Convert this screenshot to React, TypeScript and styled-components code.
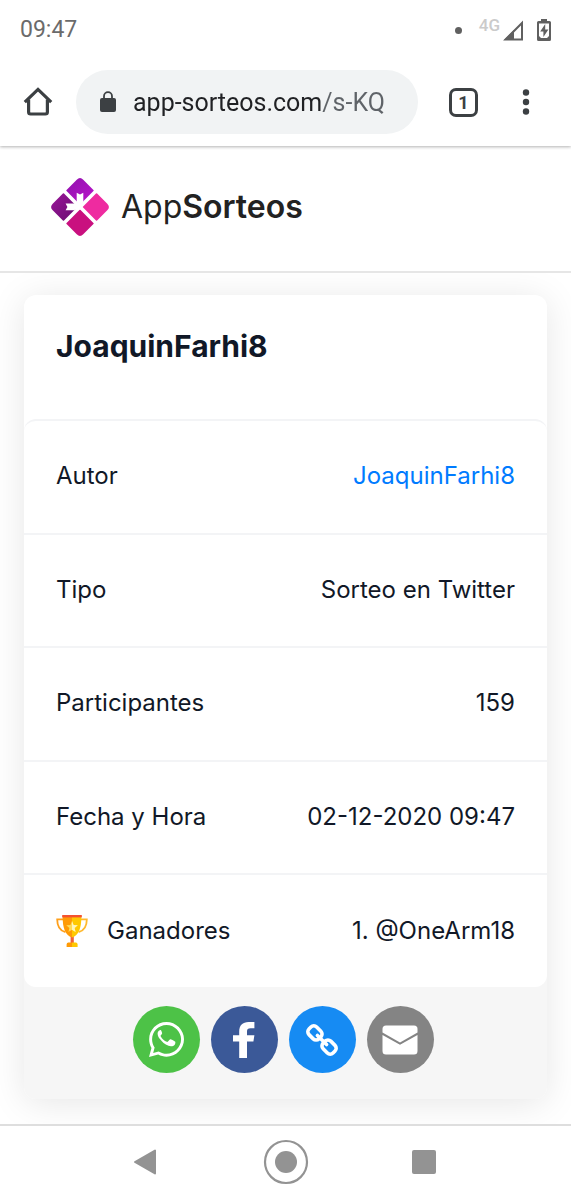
import React, { useState } from 'react';
import styled, { createGlobalStyle } from 'styled-components';

const GlobalStyle = createGlobalStyle`
  *, *::before, *::after { box-sizing: border-box; }
  body { margin: 0; background: #fff; font-family: Inter, sans-serif; color: #111827; }
  button { border: 0; padding: 0; margin: 0; background: none; font: inherit; color: inherit; cursor: pointer; }
  svg { display: block; flex: none; }
`;

const Screen = styled.div`
  display: flex;
  flex-direction: column;
  min-height: 100vh;
`;

const StatusBar = styled.div`
  position: relative;
  display: flex;
  align-items: center;
  height: 58px;
  padding: 2px 20px 0;
  background: #fff;
  font: 400 23px/28px Roboto, sans-serif;
  color: #6b6b6b;
  z-index: 3;
`;

const StatusIcons = styled.div`
  display: flex;
  align-items: center;
  margin-left: auto;
`;

const Dot = styled.span`
  width: 7px;
  height: 7px;
  margin-right: 17px;
  border-radius: 50%;
  background: #606060;
`;

const Network = styled.span`
  margin-right: 3px;
  padding-bottom: 10px;
  font: 500 17px/20px Roboto, sans-serif;
  color: #cbcbcb;
`;

const Battery = styled.svg`
  margin: 0 0 0 13px;
`;

const Toolbar = styled.div`
  position: relative;
  display: flex;
  align-items: center;
  height: 88px;
  padding: 0 30px 0 22px;
  background: #fff;
  box-shadow: 0 1px 3px rgba(0, 0, 0, 0.3);
  color: #3c4043;
  z-index: 2;
`;

const AddressBar = styled.label`
  display: flex;
  align-items: center;
  flex: 1;
  min-width: 0;
  height: 64px;
  margin: 0 31px 0 22px;
  padding: 0 30px 0 23px;
  gap: 16px;
  border-radius: 32px;
  background: #f1f3f4;
`;

const AddressInput = styled.input`
  flex: 1;
  min-width: 0;
  width: 100%;
  border: 0;
  padding: 2px 0 0;
  outline: 0;
  font: 400 25px/32px Roboto, sans-serif;
  color: transparent;
  caret-color: #202124;
  background: linear-gradient(90deg, #202124 188px, #5f6368 188px);
  -webkit-background-clip: text;
  background-clip: text;
`;

const TabsButton = styled.button`
  width: 29px;
  height: 29px;
  border: 3px solid #3c4043;
  border-radius: 7px;
  font: 700 18px/23px Roboto, sans-serif;
`;

const MenuButton = styled.button`
  display: grid;
  place-items: center;
  width: 30px;
  height: 40px;
  margin-left: 33px;
`;

const SiteHeader = styled.header`
  position: relative;
  height: 127px;
  padding: 31px 50px 0;
  border-bottom: 2px solid #e6e6e6;
  background: #fff;
  z-index: 1;
`;

const Brand = styled.a`
  display: inline-flex;
  align-items: center;
  gap: 11px;
  font: 400 32px/60px Inter, sans-serif;
  color: #222;
  text-decoration: none;

  b { font-weight: 600; }
`;

const Main = styled.main`
  display: flex;
  flex: 1;
  flex-direction: column;
  padding: 22px 24px 25px;
`;

const Card = styled.section`
  display: flex;
  flex: 1;
  flex-direction: column;
  border-radius: 12px;
  background: #fff;
  box-shadow: 0 4px 36px rgba(0, 0, 0, 0.1);
`;

const Title = styled.h1`
  margin: 0;
  padding: 31px 32px 53px;
  font-size: 30px;
  line-height: 40px;
  font-weight: 700;
`;

const CardBody = styled.div`
  position: relative;
  display: flex;
  flex: 1;
  z-index: 1;
`;

const Details = styled.dl`
  display: grid;
  grid-auto-rows: 1fr;
  flex: 1;
  margin: 0;
  border-radius: 12px;
  background: #fff;
`;

const Row = styled.div`
  display: flex;
  align-items: center;
  justify-content: space-between;
  gap: 16px;
  padding: 0 32px 1px;
  border-top: 2px solid #f3f4f6;
  font-size: 24px;
  line-height: 32px;
  font-weight: 400;

  &:first-child { border-radius: 12px 12px 0 0; }
  dt { display: flex; align-items: center; gap: 19px; }
  dd { margin: 0; text-align: right; }
`;

const AuthorLink = styled.a`
  color: #007bff;
  text-decoration: none;
`;

const ShareBar = styled.footer`
  display: flex;
  justify-content: center;
  gap: 11px;
  margin-top: -12px;
  padding: 31px 5px 26px 0;
  border-radius: 0 0 12px 12px;
  background: #f6f6f6;
`;

const ShareButton = styled.button<{ $color: string }>`
  display: grid;
  place-items: center;
  width: 67px;
  height: 67px;
  border-radius: 50%;
  background: ${(p) => p.$color};
`;

const SystemNav = styled.nav`
  position: relative;
  display: flex;
  align-items: center;
  justify-content: center;
  gap: 92px;
  height: 76px;
  padding-bottom: 2px;
  border-top: 2px solid #dedede;
  background: #fff;
  z-index: 1;
`;

const NavButton = styled.button`
  display: grid;
  place-items: center;
  width: 46px;
  height: 46px;
`;

const HomeIcon = () => (
  <svg width="32" height="32" viewBox="0 0 32 32" fill="none" stroke="#3c4043" strokeWidth="3.2">
    <path d="M2.8 16.2 16 3.4l13.2 12.8" strokeLinejoin="miter" />
    <path d="M6.6 13.5V26q0 2 2 2h14.8q2 0 2-2V13.5" />
  </svg>
);

const LockIcon = () => (
  <svg width="18" height="24" viewBox="0 0 18 24">
    <rect x="1" y="8" width="16" height="14" rx="2" fill="#3c4043" />
    <path d="M5 9V6.2a4 4 0 0 1 8 0V9" fill="none" stroke="#3c4043" strokeWidth="1.8" />
  </svg>
);

const LogoMark = () => (
  <svg width="60" height="60" viewBox="-30 -30 60 60" aria-hidden="true">
    <defs>
      <linearGradient id="top" x1="0" x2="1"><stop stopColor="#9a12b4" /><stop offset="1" stopColor="#b013c4" /></linearGradient>
      <linearGradient id="left" x1="0" x2="1"><stop stopColor="#8f1390" /><stop offset="1" stopColor="#74107a" /></linearGradient>
    </defs>
    <g transform="rotate(45)">
      <path d="M-17-21.6H-2.6q.8 0 .8.8V-2.6q0 .8-.8.8H-20.8q-.8 0-.8-.8V-17q0-4.6 4.6-4.6Z" fill="url(#top)" />
      <path d="M2.6-21.6H17q4.6 0 4.6 4.6V-2.6q0 .8-.8.8H2.6q-.8 0-.8-.8V-20.8q0-.8.8-.8Z" fill="#ee2ba0" />
      <path d="M-20.8 1.8H-2.6q.8 0 .8.8V20.8q0 .8-.8.8H-17q-4.6 0-4.6-4.6V2.6q0-.8.8-.8Z" fill="url(#left)" />
      <path d="M2.6 1.8H20.8q.8 0 .8.8V17q0 4.6-4.6 4.6H2.6q-.8 0-.8-.8V2.6q0-.8.8-.8Z" fill="#c9107f" />
    </g>
    <path d="M-3.3-14.2 0-12.6 3.3-14.2V-6L1 1-3.3-5ZM-14.4-3.4-12.6 0l-1.8 3.2H-6L1 0-5-3.4Z" fill="#fff" />
  </svg>
);

const TrophyIcon = () => (
  <svg width="32" height="32" viewBox="0 0 32 32" aria-hidden="true">
    <path d="M7 4.4H1.2c0 7 2.2 11 8.2 12.8" fill="none" stroke="#ff9f1a" strokeWidth="1.8" />
    <path d="M25 4.4h5.8c0 7-2.2 11-8.2 12.8" fill="none" stroke="#ffb92e" strokeWidth="1.8" />
    <path d="M14.6 20h3.2v9h-3.2z" fill="#f0603a" />
    <path d="M6.6 1H16v21.6C9.4 20 6.6 14 6.6 1Z" fill="#ff9a05" />
    <path d="M16 1h9.4C25.4 14 22.6 20 16 22.6Z" fill="#ffc800" />
    <path d="M6.2 0h19.6v2.4H6.2z" fill="#f4522f" />
    <path d="m16 6 1.6 3.9 4.2.3-3.2 2.7 1 4.1-3.6-2.2-3.6 2.2 1-4.1-3.2-2.7 4.2-.3Z" fill="#ffdb55" />
    <path d="m16 6 1.6 3.9 4.2.3-3.2 2.7 1 4.1-3.6-2.2Z" fill="#fff5b8" />
    <path d="M12.4 27.6H16V32h-5.4v-2.6q0-1.8 1.8-1.8Z" fill="#ff9a05" />
    <path d="M16 27.6h3.8q1.8 0 1.8 1.8V32H16Z" fill="#ffc800" />
  </svg>
);

const WhatsAppIcon = () => (
  <svg width="35" height="35" viewBox="0 32 448 448" fill="#fff">
    <path d="M380.9 97.1C339 55.1 283.2 32 223.9 32c-122.4 0-222 99.6-222 222 0 39.1 10.2 77.3 29.6 111L0 480l117.7-30.9c32.4 17.7 68.9 27 106.1 27h.1c122.3 0 224.1-99.6 224.1-222 0-59.3-25.2-115-67.1-157zm-157 341.6c-33.2 0-65.7-8.9-94-25.7l-6.7-4-69.8 18.3L72 359.2l-4.4-7c-18.5-29.4-28.2-63.3-28.2-98.2 0-101.7 82.8-184.5 184.6-184.5 49.3 0 95.6 19.2 130.4 54.1 34.8 34.9 56.2 81.2 56.1 130.5 0 101.8-84.9 184.6-186.6 184.6z" />
    <path d="M160 150c-7-16-14-16-22-14-16 4-28 22-28 46 0 28 20 56 30 68 28 38 60 68 110 86 36 13 76 2 84-24 4-13 5-22 2-28-3-5-46-28-56-31-7-2-12-1-17 6l-20 24c-4 5-9 6-16 3-30-13-58-37-78-72-3-6-1-10 3-14 14-15 19-22 15-32Z" />
  </svg>
);

const FacebookIcon = () => (
  <svg width="22" height="36" viewBox="0 0 22 36" fill="#fff">
    <path d="M6.2 36V19.6H0v-6.4h6.2V9.6C6.2 3.4 9.6 0 15.6 0H21.4v6.2h-3.8c-2.6 0-3.6 1-3.6 3.2v3.8h7.4l-1 6.4H14V36Z" />
  </svg>
);

const LinkIcon = () => (
  <svg width="36" height="36" viewBox="-18 -18 36 36" fill="none" stroke="#fff" strokeWidth="3.6">
    <g transform="rotate(45)">
      <rect x="-17" y="-5.4" width="14" height="10.8" rx="4" />
      <rect x="3" y="-5.4" width="14" height="10.8" rx="4" />
      <path d="M-6.5 0h13" strokeLinecap="round" />
    </g>
  </svg>
);

const MailIcon = () => (
  <svg width="36" height="30" viewBox="0 0 36 30" fill="#fff">
    <path d="M4 .5h28Q35.5.5 35.5 4v3.4L18 17.4.5 7.4V4Q.5.5 4 .5Z" />
    <path d="M.5 10 18 19.8 35.5 10V26q0 3.5-3.5 3.5H4Q.5 29.5.5 26Z" />
  </svg>
);

const SHARE_TARGETS = [
  { label: 'WhatsApp', color: '#4dc247', icon: <WhatsAppIcon /> },
  { label: 'Facebook', color: '#3b5998', icon: <FacebookIcon /> },
  { label: 'Copiar enlace', color: '#168bf3', icon: <LinkIcon /> },
  { label: 'Correo', color: '#848484', icon: <MailIcon /> },
];

export default function App() {
  const [url, setUrl] = useState('app-sorteos.com/s-KQ');

  return (
    <Screen>
      <GlobalStyle />
      <StatusBar>
        <span>09:47</span>
        <StatusIcons>
          <Dot />
          <Network>4G</Network>
          <svg width="21" height="21" viewBox="0 0 21 21">
            <path d="M2.5 19.5 19 3v16.5Z" fill="none" stroke="#606060" strokeWidth="2" />
            <path d="M1 20 11 10v10Z" fill="#606060" />
          </svg>
          <Battery width="14" height="22" viewBox="0 0 14 22">
            <path d="M4 0h6v2h2.5Q14 2 14 3.5v17q0 1.5-1.5 1.5h-11Q0 22 0 20.5v-17Q0 2 1.5 2H4Z" fill="#606060" />
            <path d="M2 4.5h10V17l-2 2H4l-2-2Z" fill="#fff" />
            <path d="M8.2 5 3.2 12.6h3.2V18l5-7.6H8.2Z" fill="#606060" />
          </Battery>
        </StatusIcons>
      </StatusBar>

      <Toolbar>
        <button type="button" aria-label="Inicio"><HomeIcon /></button>
        <AddressBar>
          <LockIcon />
          <AddressInput aria-label="Dirección" value={url} onChange={(e) => setUrl(e.target.value)} />
        </AddressBar>
        <TabsButton type="button" aria-label="Pestañas">1</TabsButton>
        <MenuButton type="button" aria-label="Menú">
          <svg width="8" height="26" viewBox="0 0 8 26" fill="#3c4043">
            <circle cx="4" cy="3.5" r="3.2" />
            <circle cx="4" cy="13" r="3.2" />
            <circle cx="4" cy="22.5" r="3.2" />
          </svg>
        </MenuButton>
      </Toolbar>

      <SiteHeader>
        <Brand href="#inicio">
          <LogoMark />
          <span>App<b>Sorteos</b></span>
        </Brand>
      </SiteHeader>

      <Main>
        <Card>
          <Title>JoaquinFarhi8</Title>
          <CardBody>
            <Details>
              <Row><dt>Autor</dt><dd><AuthorLink href="#autor">JoaquinFarhi8</AuthorLink></dd></Row>
              <Row><dt>Tipo</dt><dd>Sorteo en Twitter</dd></Row>
              <Row><dt>Participantes</dt><dd>159</dd></Row>
              <Row><dt>Fecha y Hora</dt><dd>02-12-2020 09:47</dd></Row>
              <Row><dt><TrophyIcon />Ganadores</dt><dd>1. @OneArm18</dd></Row>
            </Details>
          </CardBody>
          <ShareBar>
            {SHARE_TARGETS.map((t) => (
              <ShareButton key={t.label} type="button" aria-label={t.label} $color={t.color}>
                {t.icon}
              </ShareButton>
            ))}
          </ShareBar>
        </Card>
      </Main>

      <SystemNav aria-label="Sistema">
        <NavButton type="button" aria-label="Atrás">
          <svg width="30" height="28" viewBox="0 0 30 28"><path d="M22 2.5v23L2 14Z" fill="#939393" stroke="#939393" strokeWidth="2" strokeLinejoin="round" /></svg>
        </NavButton>
        <NavButton type="button" aria-label="Inicio del sistema">
          <svg width="46" height="46" viewBox="0 0 46 46">
            <circle cx="23" cy="23" r="21" fill="none" stroke="#939393" strokeWidth="2.2" />
            <circle cx="23" cy="23" r="11" fill="#939393" />
          </svg>
        </NavButton>
        <NavButton type="button" aria-label="Recientes">
          <svg width="24" height="24" viewBox="0 0 24 24"><rect width="24" height="24" rx="2" fill="#939393" /></svg>
        </NavButton>
      </SystemNav>
    </Screen>
  );
}
